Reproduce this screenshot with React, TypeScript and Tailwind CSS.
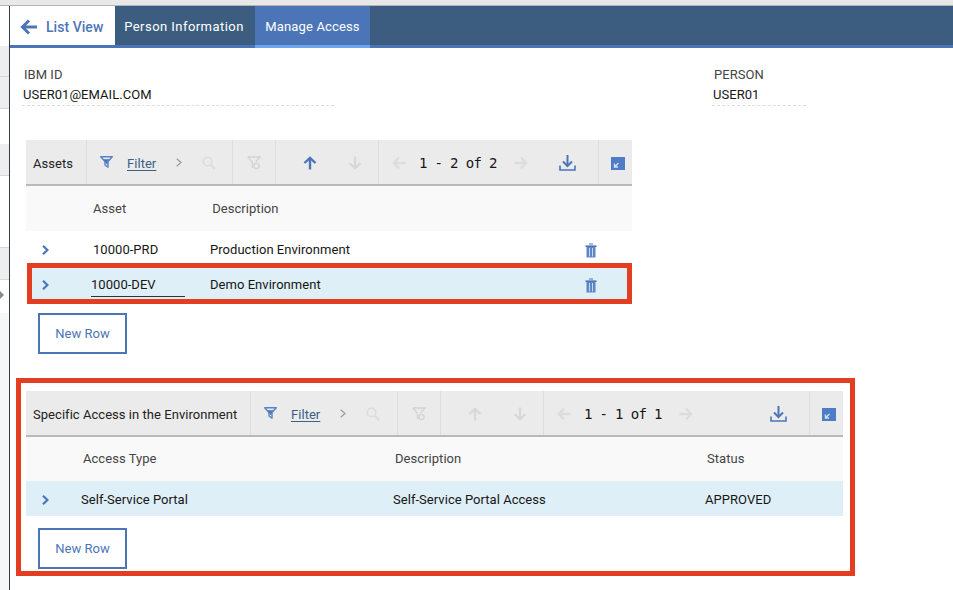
const F = "font-['Roboto',sans-serif] tracking-[0.04px]";

function Funnel() {
  return (
    <svg width="13" height="12" viewBox="0 0 13 12" fill="none">
      <path d="M0.7 0.7H12.3L8 5.5V11.3L5 9V5.5Z" fill="#e4e8f0" stroke="#5a82c4" strokeWidth="1.4" strokeLinejoin="round" />
      <path d="M3.5 3.2H9.5L7.5 5.5V8.5L6 7.5Z" fill="#4c75b8" />
    </svg>
  );
}
function Search() {
  return (
    <svg width="14" height="14" viewBox="0 0 14 14" fill="none" stroke="#dcdcdc">
      <circle cx="5.5" cy="5.5" r="4.3" strokeWidth="1.5" />
      <path d="M9 9L13 13" strokeWidth="2" />
    </svg>
  );
}
function ClearFilter() {
  return (
    <svg width="14" height="14" viewBox="0 0 14 14" fill="none" stroke="#d4d4d4" strokeWidth="1.4">
      <path d="M0.8 1H13L8.5 6" />
      <path d="M0.8 1L5.5 6.5V12" />
      <circle cx="9.5" cy="10" r="2.6" />
    </svg>
  );
}
function Arrow({ dir, color }: { dir: "up" | "down" | "left" | "right"; color: string }) {
  const rot = { up: 0, right: 90, down: 180, left: 270 }[dir];
  return (
    <svg width="14" height="14" viewBox="0 0 14 14" fill="none" stroke={color} strokeWidth="2.4" style={{ transform: `rotate(${rot}deg)` }}>
      <path d="M7 13.5V2" />
      <path d="M1.5 7L7 1.8L12.5 7" />
    </svg>
  );
}
function Download() {
  return (
    <svg width="17" height="16" viewBox="0 0 17 16" fill="none" stroke="#4c75b8">
      <path d="M8.5 0V10.5" strokeWidth="2" />
      <path d="M4 6.5L8.5 11L13 6.5" strokeWidth="2" />
      <path d="M1 10.5V15H16V10.5" strokeWidth="1.6" />
    </svg>
  );
}
function Collapse() {
  return (
    <svg width="14" height="13" viewBox="0 0 14 13">
      <rect width="14" height="13" fill="#4f7cc6" />
      <path d="M3.5 6.5V10H7M4 9.5L7.5 6" fill="none" stroke="#d5def0" strokeWidth="1.4" />
    </svg>
  );
}
function Chevron() {
  return (
    <svg width="7" height="10" viewBox="0 0 7 10" fill="none" stroke="#4c75b8" strokeWidth="2.2">
      <path d="M1 0.8L5.4 5L1 9.2" />
    </svg>
  );
}
function SmallChevron() {
  return (
    <svg width="6" height="9" viewBox="0 0 6 9" fill="none" stroke="#9a9a92" strokeWidth="1.2">
      <path d="M0.7 0.8L5 4.5L0.7 8.2" />
    </svg>
  );
}
function Trash() {
  return (
    <svg width="12" height="15" viewBox="0 0 12 15">
      <path d="M4 0.5H8V1.5H4Z" fill="#4c75b8" />
      <rect x="0.5" y="2.4" width="11" height="1.6" fill="#4c75b8" />
      <rect x="1.5" y="4" width="9" height="10.5" fill="#5f86c4" />
      <rect x="4" y="5" width="1" height="8.5" fill="#c9d8ee" />
      <rect x="7" y="5" width="1" height="8.5" fill="#c9d8ee" />
    </svg>
  );
}

function Toolbar({ title, titleW, filterW, pageW, arrowsOn, page }: { title: string; titleW: string; filterW: string; pageW: string; arrowsOn: boolean; page: string }) {
  return (
    <div className="flex h-[46px] items-center border-b-2 border-[#b9b9b9] bg-[#ebebeb] text-[13px]">
      <div className={`flex h-full shrink-0 items-center border-r border-[#dedede] pl-[7px] pt-[4px] text-[#222222] ${titleW}`}>{title}</div>
      <div className={`flex h-full shrink-0 items-center border-r border-[#dedede] pl-[13px] pt-[2px] ${filterW}`}>
        <span className="-mt-[2px]"><Funnel /></span>
        <span className="ml-[14px] pt-[2px] text-[#3d5f85] underline underline-offset-2">Filter</span>
        <span className="-mt-[2px] ml-[20px]"><SmallChevron /></span>
        <span className="ml-[20px]"><Search /></span>
      </div>
      <div className="flex h-full w-[43px] shrink-0 items-center justify-center border-r border-[#dedede] pt-[2px]"><ClearFilter /></div>
      <div className="flex h-full w-[103px] shrink-0 items-center justify-center gap-[31px] border-r border-[#dedede] pl-[10px] pt-[2px]">
        <Arrow dir="up" color={arrowsOn ? "#4c75b8" : "#d8d8d8"} />
        <Arrow dir="down" color="#d8d8d8" />
      </div>
      <div className={`flex h-full shrink-0 items-center border-r border-[#dedede] pl-[13px] pt-[2px] ${pageW}`}>
        <Arrow dir="left" color="#dcdcdc" />
        <span className="ml-[13px] pt-[1px] font-['DejaVu_Sans_Mono',monospace] text-[14px] tracking-[-0.65px] text-[#161616]">{page}</span>
        <span className="ml-[17px]"><Arrow dir="right" color="#dcdcdc" /></span>
        <span className="ml-auto mr-[22px]"><Download /></span>
      </div>
      <div className="flex h-full flex-1 items-center justify-center pl-[4px] pt-[2px]"><Collapse /></div>
    </div>
  );
}

function NewRow() {
  return (
    <button className="flex h-[41px] w-[89px] items-center justify-center border-2 border-[#4c75b8] bg-white text-[13px] text-[#4c75b8]">
      New Row
    </button>
  );
}

export default function App() {
  return (
    <div className={`flex h-[590px] w-[953px] flex-col overflow-hidden bg-white ${F}`}>
      <div className="h-[6px] shrink-0 border-b border-[#b5b5b5] bg-[#e8e8e8]" />
      <div className="flex flex-1">
        <div className="flex w-[10px] shrink-0 flex-col border-r border-[#323c50]">
          <div className="mt-[40px] h-[31px] border-b border-[#d6d6d6] bg-[#eeeeee]" />
          <div className="h-[32px] border-b border-[#d6d6d6] bg-[#eeeeee]" />
          <div className="mt-[35px] h-[32px] border-b border-[#d6d6d6] bg-[#eeeeee]" />
          <div className="mt-[71px] h-[33px] border-y border-[#d6d6d6] bg-[#eeeeee]" />
          <div className="flex h-[33px] items-center">
            <div className="mb-[3px] h-0 w-0 border-y-[4px] border-l-[4px] border-y-transparent border-l-[#8a8a8a]" />
          </div>
          <div className="flex-1 bg-[#f7f7f7]" />
        </div>
        <div className="flex flex-1 flex-col">
          <div className="flex h-[42px] shrink-0 border-b-[3px] border-[#4c75b8] bg-[#3c5d7f] text-[13px]">
            <div className="flex w-[105px] items-center bg-white pl-[10px] pt-[3px] font-medium text-[#4c75b8]">
              <svg width="17" height="16" viewBox="0 0 17 16" fill="none" stroke="#4c75b8" strokeWidth="3"><path d="M17 8H3" /><path d="M9 1.5L2.5 8L9 14.5" /></svg>
              <span className="ml-[9px] text-[14px]">List View</span>
            </div>
            <div className="flex w-[140px] items-center justify-center pr-[2px] pt-[3px] tracking-[0.45px] text-white">Person Information</div>
            <div className="-mb-[3px] flex w-[115px] items-center justify-center border-b-[3px] border-[#6ea6ee] bg-[#4c75b8] pt-[3px] tracking-[0.15px] text-white">Manage Access</div>
          </div>

          <div className="flex pt-[18px] text-[13px]">
            <div className="ml-[12px] w-[312px] border-b border-dashed border-[#dddddd] pb-[2px]">
              <div className="pl-[2px] leading-[17px] text-[#444444]">IBM ID</div>
              <div className="mt-[3px] pl-[1px] leading-[17px] text-[#161616]">USER01@EMAIL.COM</div>
            </div>
            <div className="ml-[378px] w-[94px] border-b border-dashed border-[#dddddd] pb-[2px]">
              <div className="pl-[2px] leading-[17px] text-[#444444]">PERSON</div>
              <div className="mt-[3px] pl-[1px] leading-[17px] text-[#161616]">USER01</div>
            </div>
          </div>

          <div className="ml-[16px] mt-[34px] w-[606px] text-[13px]">
            <Toolbar title="Assets" titleW="w-[61px]" filterW="w-[146px]" pageW="w-[220px]" arrowsOn page="1 - 2 of 2" />
            <div className="flex h-[45px] items-center bg-[#f9f9f9] text-[#444444]">
              <span className="ml-[67px]">Asset</span>
              <span className="ml-[86px]">Description</span>
            </div>
            <div className="flex h-[32px] items-center pt-[6px] text-[#161616]">
              <span className="ml-[16px]"><Chevron /></span>
              <span className="ml-[44px] w-[117px]">10000-PRD</span>
              <span>Production Environment</span>
              <span className="ml-auto mr-[35px]"><Trash /></span>
            </div>
          </div>
          <div className="ml-[17px] w-[605px] border-[5px] border-[#e43e22] bg-[#dfeff7]">
            <div className="flex h-[31px] items-center text-[13px] text-[#161616]">
              <span className="ml-[10px] mt-[3px]"><Chevron /></span>
              <span className="ml-[42px] mt-[3px] h-[24px] w-[94px] border-b border-[#333333] pt-[2px]">10000-DEV</span>
              <span className="ml-[25px] mt-[3px]">Demo Environment</span>
              <span className="ml-auto mr-[30px] mt-[4px]"><Trash /></span>
            </div>
          </div>
          <div className="ml-[28px] mt-[9px]"><NewRow /></div>

          <div className="ml-[6px] mt-[24px] w-[839px] border-[5px] border-[#e43e22] pb-[2px] pl-[5px] pr-[7px] pt-[8px] text-[13px]">
            <Toolbar title="Specific Access in the Environment" titleW="w-[225px]" filterW="w-[147px]" pageW="w-[266px]" arrowsOn={false} page="1 - 1 of 1" />
            <div className="flex h-[44px] items-center bg-[#f9f9f9] text-[#444444]">
              <span className="ml-[57px] w-[312px]">Access Type</span>
              <span className="w-[312px]">Description</span>
              <span>Status</span>
            </div>
            <div className="flex h-[35px] items-center bg-[#dfeff7] pt-[3px] text-[#161616]">
              <span className="ml-[16px]"><Chevron /></span>
              <span className="ml-[32px] w-[312px]">Self-Service Portal</span>
              <span className="w-[312px]">Self-Service Portal Access</span>
              <span>APPROVED</span>
            </div>
            <div className="ml-[12px] mt-[12px]"><NewRow /></div>
          </div>
        </div>
      </div>
    </div>
  );
}
